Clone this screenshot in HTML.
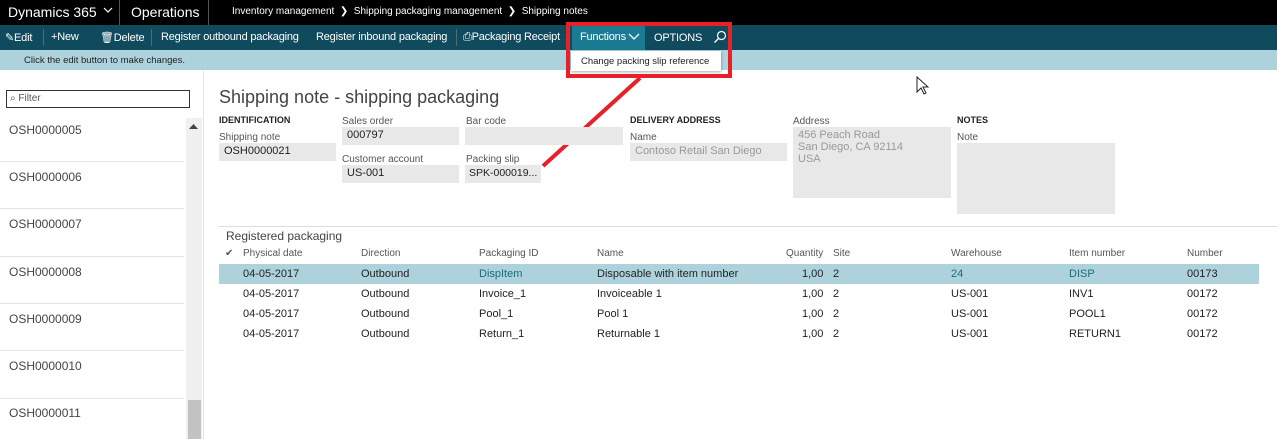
<!DOCTYPE html>
<html><head><style>
*{margin:0;padding:0;box-sizing:border-box}
body{width:1277px;height:439px;overflow:hidden;position:relative;background:#fff;font-family:"Liberation Sans",sans-serif;font-size:11px;color:#222}
.a{position:absolute;white-space:nowrap}
.lbl{font-size:10px;color:#555}
.box{position:absolute;background:#e8e8e8;font-size:11px;padding:2px 5px;color:#222;white-space:nowrap;overflow:hidden}
.hd{font-size:9px;font-weight:bold;color:#222}
.tb{color:#fff;font-size:11px;top:31px;letter-spacing:-0.2px}
.li{position:absolute;left:9px;font-size:12px;color:#444}
.sep{position:absolute;left:0;width:184px;height:1px;background:#e4e4e4}
.th{top:248px;color:#555;font-size:10px}
.c{font-size:11px;color:#222}
.t{color:#1b6b80}
</style></head><body>
<div class="a" style="left:0;top:0;width:1277px;height:25px;background:#000"></div>
<div class="a" style="left:8px;top:4px;color:#fff;font-size:14px">Dynamics 365</div>
<svg class="a" style="left:103px;top:6px" width="10" height="8"><path d="M1 2 L5 6 L9 2" stroke="#fff" fill="none" stroke-width="1.2"/></svg>
<div class="a" style="left:119px;top:0;width:1px;height:25px;background:#555"></div>
<div class="a" style="left:131px;top:4px;color:#fff;font-size:14px">Operations</div>
<div class="a" style="left:208px;top:0;width:1px;height:25px;background:#555"></div>
<div class="a" style="left:232px;top:6px;color:#fff;font-size:10px">Inventory management &nbsp;&#x276F;&nbsp; Shipping packaging management &nbsp;&#x276F;&nbsp; Shipping notes</div>
<div class="a" style="left:0;top:25px;width:1277px;height:25px;background:#0f4a5d"></div>
<div class="a tb" style="left:5px">&#x270E;Edit</div>
<div class="a" style="left:43px;top:29px;width:1px;height:17px;background:#567"></div>
<div class="a tb" style="left:51px">+New</div>
<div class="a tb" style="left:100px">&#x1F5D1;Delete</div>
<div class="a" style="left:151px;top:29px;width:1px;height:17px;background:#567"></div>
<div class="a tb" style="left:161px">Register outbound packaging</div>
<div class="a tb" style="left:316px">Register inbound packaging</div>
<div class="a" style="left:456px;top:29px;width:1px;height:17px;background:#567"></div>
<div class="a tb" style="left:463px">&#x2399;Packaging Receipt</div>
<div class="a" style="left:572px;top:25px;width:73px;height:25px;background:#1a7b93"></div>
<div class="a tb" style="left:580px">Functions</div>
<svg class="a" style="left:628px;top:32px" width="12" height="9"><path d="M1 2 L6 7 L11 2" stroke="#fff" fill="none" stroke-width="1.3"/></svg>
<div class="a tb" style="left:654px;top:32px">OPTIONS</div>
<svg class="a" style="left:713px;top:30px" width="14" height="14"><circle cx="8.5" cy="5.5" r="4" stroke="#fff" fill="none" stroke-width="1.2"/><path d="M5.5 8.5 L1.5 12.5" stroke="#fff" stroke-width="1.3"/></svg>
<div class="a" style="left:0;top:50px;width:1277px;height:20px;background:#add2dc"></div>
<div class="a" style="left:24px;top:55px;font-size:9.5px;color:#222">Click the edit button to make changes.</div>
<div class="a" style="left:571px;top:51px;width:150px;height:20px;background:#fff;box-shadow:0 1px 3px rgba(0,0,0,.35)"></div>
<div class="a" style="left:581px;top:56px;font-size:9.5px">Change packing slip reference</div>
<div class="a" style="left:566px;top:22px;width:166px;height:56px;border:4px solid #e8202a"></div>
<svg class="a" style="left:0;top:0" width="1277" height="439"><line x1="543" y1="166" x2="640" y2="78" stroke="#e8202a" stroke-width="4"/>
<path d="M917 77 L917 92 L921 88 L924 94 L926 93 L923 87 L928 87 Z" fill="#fff" stroke="#222" stroke-width="1"/></svg>
<div class="a" style="left:203px;top:70px;width:1px;height:369px;background:#e4e4e4"></div>
<div class="a" style="left:6px;top:90px;width:184px;height:18px;border:1px solid #333"></div>
<div class="a" style="left:10px;top:93px;font-size:10px;color:#555">&#x2315; Filter</div>
<div class="a" style="left:186px;top:118px;width:16px;height:321px;background:#f0f0f0"></div>
<div class="a" style="left:188px;top:400px;width:13px;height:39px;background:#c2c2c2"></div>
<svg class="a" style="left:189px;top:124px" width="9" height="6"><path d="M0 5 L4.5 0 L9 5Z" fill="#444"/></svg>
<div class="li" style="top:123px">OSH0000005</div><div class="sep" style="top:161px"></div>
<div class="li" style="top:170px">OSH0000006</div><div class="sep" style="top:208px"></div>
<div class="li" style="top:217px">OSH0000007</div><div class="sep" style="top:256px"></div>
<div class="li" style="top:265px">OSH0000008</div><div class="sep" style="top:303px"></div>
<div class="li" style="top:312px">OSH0000009</div><div class="sep" style="top:350px"></div>
<div class="li" style="top:359px">OSH0000010</div><div class="sep" style="top:398px"></div>
<div class="li" style="top:406px">OSH0000011</div>
<div class="a" style="left:219px;top:87px;font-size:18px;color:#444">Shipping note - shipping packaging</div>
<div class="a hd" style="left:219px;top:115px">IDENTIFICATION</div>
<div class="a lbl" style="left:219px;top:132px">Shipping note</div>
<div class="box" style="left:219px;top:143px;width:117px;height:18px">OSH0000021</div>
<div class="a lbl" style="left:342px;top:116px">Sales order</div>
<div class="box" style="left:342px;top:127px;width:117px;height:18px">000797</div>
<div class="a lbl" style="left:466px;top:116px">Bar code</div>
<div class="box" style="left:465px;top:127px;width:158px;height:18px"></div>
<div class="a lbl" style="left:342px;top:154px">Customer account</div>
<div class="box" style="left:342px;top:165px;width:117px;height:18px">US-001</div>
<div class="a lbl" style="left:466px;top:154px">Packing slip</div>
<div class="box" style="left:465px;top:165px;width:76px;height:18px;padding:2px 4px;font-size:10.5px">SPK-000019...</div>
<div class="a hd" style="left:630px;top:115px">DELIVERY ADDRESS</div>
<div class="a lbl" style="left:630px;top:132px">Name</div>
<div class="box" style="left:630px;top:143px;width:157px;height:18px;color:#999">Contoso Retail San Diego</div>
<div class="a lbl" style="left:793px;top:116px">Address</div>
<div class="box" style="left:793px;top:127px;width:158px;height:71px;color:#999;line-height:12px;white-space:normal">456 Peach Road<br>San Diego, CA 92114<br>USA</div>
<div class="a hd" style="left:957px;top:115px">NOTES</div>
<div class="a lbl" style="left:957px;top:132px">Note</div>
<div class="box" style="left:957px;top:143px;width:158px;height:71px"></div>
<div class="a" style="left:219px;top:226px;width:1058px;height:1px;background:#ddd"></div>
<div class="a" style="left:226px;top:229px;font-size:12px;color:#444">Registered packaging</div>
<div class="a th" style="left:225px;color:#555">&#x2714;</div>
<div class="a th" style="left:243px">Physical date</div>
<div class="a th" style="left:361px">Direction</div>
<div class="a th" style="left:479px">Packaging ID</div>
<div class="a th" style="left:597px">Name</div>
<div class="a th" style="left:786px">Quantity</div>
<div class="a th" style="left:833px">Site</div>
<div class="a th" style="left:951px">Warehouse</div>
<div class="a th" style="left:1069px">Item number</div>
<div class="a th" style="left:1187px">Number</div>
<div class="a" style="left:219px;top:264px;width:1040px;height:20px;background:#add2dc"></div>
<div class="a c" style="left:243px;top:268px">04-05-2017</div><div class="a c" style="left:361px;top:268px">Outbound</div><div class="a c t" style="left:479px;top:268px">DispItem</div><div class="a c" style="left:597px;top:268px">Disposable with item number</div><div class="a c" style="left:802px;top:268px">1,00</div><div class="a c" style="left:833px;top:268px">2</div><div class="a c t" style="left:951px;top:268px">24</div><div class="a c t" style="left:1069px;top:268px">DISP</div><div class="a c" style="left:1187px;top:268px">00173</div>
<div class="a c" style="left:243px;top:288px">04-05-2017</div><div class="a c" style="left:361px;top:288px">Outbound</div><div class="a c" style="left:479px;top:288px">Invoice_1</div><div class="a c" style="left:597px;top:288px">Invoiceable 1</div><div class="a c" style="left:802px;top:288px">1,00</div><div class="a c" style="left:833px;top:288px">2</div><div class="a c" style="left:951px;top:288px">US-001</div><div class="a c" style="left:1069px;top:288px">INV1</div><div class="a c" style="left:1187px;top:288px">00172</div>
<div class="a c" style="left:243px;top:308px">04-05-2017</div><div class="a c" style="left:361px;top:308px">Outbound</div><div class="a c" style="left:479px;top:308px">Pool_1</div><div class="a c" style="left:597px;top:308px">Pool 1</div><div class="a c" style="left:802px;top:308px">1,00</div><div class="a c" style="left:833px;top:308px">2</div><div class="a c" style="left:951px;top:308px">US-001</div><div class="a c" style="left:1069px;top:308px">POOL1</div><div class="a c" style="left:1187px;top:308px">00172</div>
<div class="a c" style="left:243px;top:328px">04-05-2017</div><div class="a c" style="left:361px;top:328px">Outbound</div><div class="a c" style="left:479px;top:328px">Return_1</div><div class="a c" style="left:597px;top:328px">Returnable 1</div><div class="a c" style="left:802px;top:328px">1,00</div><div class="a c" style="left:833px;top:328px">2</div><div class="a c" style="left:951px;top:328px">US-001</div><div class="a c" style="left:1069px;top:328px">RETURN1</div><div class="a c" style="left:1187px;top:328px">00172</div>
</body></html>
